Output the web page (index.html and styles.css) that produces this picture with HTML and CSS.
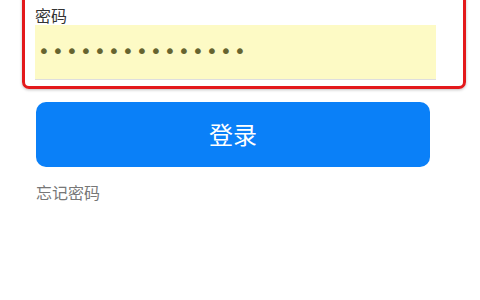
FILE: index.html
```html
<!DOCTYPE html>
<html lang="zh-CN">
<head>
    <meta charset="UTF-8">
    <meta name="viewport" content="width=device-width, initial-scale=1.0">
    <title>登录</title>
    <link rel="stylesheet" href="styles.css">
</head>
<body>

    <!-- Password field (highlighted) -->
    <div class="field-box">
        <div class="field-label">密码</div>
        <div class="field-input"><span class="dots">•••••••••••••••</span></div>
    </div>

    <!-- Login button -->
    <button class="login-btn">登录</button>

    <a class="forgot" href="#">忘记密码</a>

</body>
</html>
```

FILE: styles.css
```css
* { margin: 0; padding: 0; box-sizing: border-box; }
body {
    width: 480px;
    height: 300px;
    background: #fff;
    font-family: "Noto Sans CJK SC", "Noto Sans", sans-serif;
    overflow: hidden;
}
.field-box {
    margin: -20px 14px 0 22px;
    padding: 25px 27px 6px 10px;
    border: 3px solid #e3191b;
    border-radius: 7px;
    box-shadow: 0 1px 3px rgba(0, 0, 0, 0.25);
}
.field-label {
    font-size: 16px;
    line-height: 22px;
    color: #333;
    margin-top: -4px;
    height: 21px;
}
.field-input {
    height: 55px;
    background: #fdfac5;
    border-bottom: 1px solid #dedede;
    display: flex;
    align-items: center;
    padding-left: 3px;
    padding-bottom: 3px;
}
.dots {
    font-family: "DejaVu Sans", sans-serif;
    font-size: 20px;
    letter-spacing: 2.2px;
    color: #66642f;
    line-height: 1;
}
.login-btn {
    display: flex;
    align-items: center;
    justify-content: center;
    margin: 13px 0 0 36px;
    width: 394px;
    height: 65px;
    background: #0a80f8;
    border: none;
    border-radius: 10px;
    color: #fff;
    font-family: "Noto Sans CJK SC", sans-serif;
    font-size: 24px;
    padding-bottom: 2px;
}
.forgot {
    display: block;
    margin: 15px 0 0 36px;
    font-size: 16px;
    line-height: 20px;
    color: #777;
    text-decoration: none;
}
```
